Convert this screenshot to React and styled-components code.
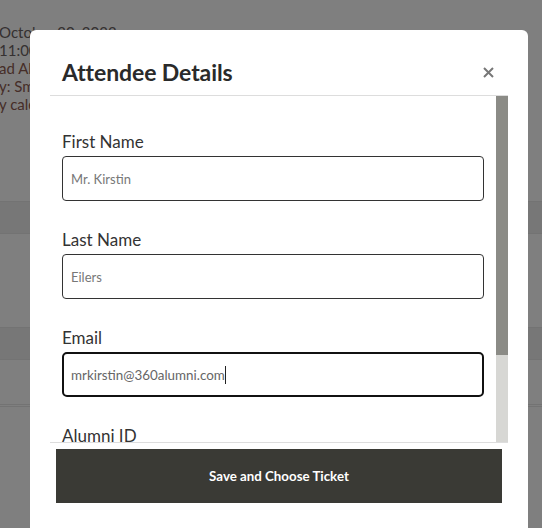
import React from "react";
import styled, { createGlobalStyle } from "styled-components";

const Global = createGlobalStyle`
  html, body { margin: 0; padding: 0; }
  body { font-family: Lato, "Noto Sans", sans-serif; background: #fff; width: 542px; height: 528px; overflow: hidden; }
  * { box-sizing: border-box; }
`;

const Page = styled.div`
  position: relative;
  width: 542px;
  height: 528px;
  overflow: hidden;
  background: #fff;
`;

const Backdrop = styled.div`
  display: flex;
  flex-direction: column;
  padding-top: 23px;
`;

const InfoList = styled.div`
  display: flex;
  flex-direction: column;
  margin-left: -1px;
  font-size: 15px;
  line-height: 18px;
`;

const InfoLine = styled.div`
  color: ${(p) => (p.$accent ? "#8c5b50" : "#6b6262")};
  white-space: nowrap;
`;

const Table = styled.div`
  display: flex;
  flex-direction: column;
  margin-top: 88px;
`;

const Row = styled.div`
  height: ${(p) => p.$h}px;
  background: ${(p) => (p.$shade ? "#efefef" : "#fff")};
  border-top: ${(p) => (p.$line ? "1px solid #e6e6e6" : "none")};
`;

const Overlay = styled.div`
  position: absolute;
  inset: 0;
  background: rgba(0, 0, 0, 0.5);
`;

const Modal = styled.div`
  position: absolute;
  left: 30px;
  top: 30px;
  width: 498px;
  height: 530px;
  background: #fff;
  border-radius: 6px;
  padding: 0 20px;
  display: flex;
  flex-direction: column;
`;

const Header = styled.div`
  height: 66px;
  flex: none;
  display: flex;
  align-items: center;
  justify-content: space-between;
  padding: 19px 14px 0 12px;
  border-bottom: 1px solid #dddddd;
`;

const Title = styled.h2`
  margin: 0;
  font-size: 23px;
  font-weight: 700;
  color: #2a2a2a;
  letter-spacing: -0.1px;
`;

const Close = styled.button`
  border: none;
  background: none;
  padding: 0;
  width: 12px;
  height: 12px;
  display: flex;
  align-items: center;
  justify-content: center;
  cursor: pointer;
`;

const Body = styled.div`
  height: 346px;
  flex: none;
  display: flex;
  overflow: hidden;
`;

const Scroller = styled.div`
  flex: 1;
  min-width: 0;
  overflow: hidden;
  padding: 34px 12px 0;
  display: flex;
  flex-direction: column;
  gap: 27px;
`;

const Track = styled.div`
  width: 12px;
  flex: none;
  background: #d7d7d4;
  display: flex;
  flex-direction: column;
`;

const Thumb = styled.div`
  height: 259px;
  background: #8b8b86;
`;

const Group = styled.div`
  display: flex;
  flex-direction: column;
  gap: 2px;
  flex: none;
`;

const Label = styled.label`
  font-size: 17px;
  line-height: 24px;
  color: #333;
`;

const Input = styled.input`
  height: 45px;
  width: 100%;
  border: 1px solid #333;
  border-radius: 4px;
  padding: 0 8px;
  font-family: inherit;
  font-size: 13px;
  color: #666;
  outline: none;
  &::placeholder { color: #777; }
`;

const FocusedInput = styled.div`
  height: 45px;
  border: 2px solid #111;
  border-radius: 5px;
  padding: 0 7px;
  display: flex;
  align-items: center;
  font-size: 13.4px;
  color: #666;
`;

const Caret = styled.span`
  width: 1px;
  height: 18px;
  background: #222;
`;

const Footer = styled.div`
  flex: none;
  border-top: 1px solid #dddddd;
  padding: 6px 6px;
`;

const SaveButton = styled.button`
  width: 100%;
  height: 54px;
  border: none;
  background: #3a3a35;
  color: #fff;
  font-family: inherit;
  font-size: 13.3px;
  font-weight: 700;
  cursor: pointer;
`;

export default function App() {
  return (
    <>
      <Global />
      <Page>
        <Backdrop>
          <InfoList>
            <InfoLine>October 20, 2022</InfoLine>
            <InfoLine> 11:00 AM – 1:00 PM</InfoLine>
            <InfoLine $accent>ad Alumni Chapter</InfoLine>
            <InfoLine $accent>y: Smith Hall</InfoLine>
            <InfoLine $accent>y calendar</InfoLine>
          </InfoList>
          <Table>
            <Row $h={32} $shade $line />
            <Row $h={94} $line />
            <Row $h={32} $shade $line />
            <Row $h={45} $line />
            <Row $h={2} $line />
            <Row $h={120} $line />
          </Table>
        </Backdrop>
        <Overlay />
        <Modal>
          <Header>
            <Title>Attendee Details</Title>
            <Close aria-label="Close">
              <svg width="11" height="11" viewBox="0 0 11 11">
                <path d="M1 1L10 10M10 1L1 10" stroke="#777" strokeWidth="2" />
              </svg>
            </Close>
          </Header>
          <Body>
            <Scroller>
              <Group>
                <Label>First Name</Label>
                <Input placeholder="Mr. Kirstin" />
              </Group>
              <Group>
                <Label>Last Name</Label>
                <Input placeholder="Eilers" />
              </Group>
              <Group>
                <Label>Email</Label>
                <FocusedInput>
                  mrkirstin@360alumni.com
                  <Caret />
                </FocusedInput>
              </Group>
              <Group>
                <Label>Alumni ID</Label>
                <Input />
              </Group>
            </Scroller>
            <Track>
              <Thumb />
            </Track>
          </Body>
          <Footer>
            <SaveButton>Save and Choose Ticket</SaveButton>
          </Footer>
        </Modal>
      </Page>
    </>
  );
}
